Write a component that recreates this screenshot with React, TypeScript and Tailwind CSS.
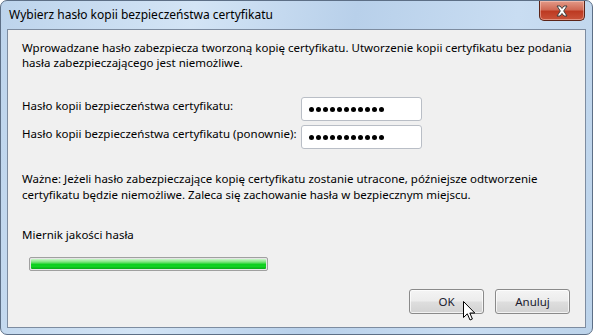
import React from "react";

const font = { fontFamily: '"Noto Sans", "Open Sans", sans-serif' };

const Dots = () => (
  <div className="flex items-center pl-[6px] h-full">
    {Array.from({ length: 11 }).map((_, i) => (
      <span key={i} className="w-[7px] flex justify-center">
        <span className="block w-[5px] h-[5px] rounded-full bg-black" />
      </span>
    ))}
  </div>
);

const Field = ({ label }: { label: string }) => (
  <div className="flex items-start h-[24px]">
    <div className="w-[279px] pt-[1px] leading-[15px] whitespace-nowrap">{label}</div>
    <div className="w-[121px] h-[24px] bg-white border border-[#b9bec6] rounded-[3px]">
      <Dots />
    </div>
  </div>
);

const Button = ({ children }: { children: React.ReactNode }) => (
  <button className="w-[75px] h-[25px] border border-[#8a8a8a] rounded-[3px] bg-[linear-gradient(180deg,#f4f4f4_0%,#ececec_48%,#dedede_52%,#d2d2d2_100%)] text-[11.5px] text-[#1a1a2e] leading-none shadow-[inset_0_0_0_1px_rgba(255,255,255,0.7)]">
    {children}
  </button>
);

export default function App() {
  return (
    <div
      className="relative w-[593px] h-[335px] rounded-[7px] border border-[#5d6f86] bg-[linear-gradient(100deg,#bdd4ec_0%,#d3e4f5_30%,#b8d0ea_55%,#c9ddf2_80%,#bcd3ea_100%)] overflow-hidden text-[11.5px] text-black"
      style={font}
    >
      <div className="h-[28px] flex items-center pl-[8px] text-[12px] text-black whitespace-nowrap">
        Wybierz hasło kopii bezpieczeństwa certyfikatu
      </div>

      <div className="absolute right-[7px] top-0 w-[46px] h-[20px] rounded-b-[5px] border border-t-0 border-[#5b2418] bg-[linear-gradient(180deg,#e39a88_0%,#d06a55_45%,#bd3a22_55%,#c9533a_100%)] flex items-center justify-center shadow-[inset_0_0_0_1px_rgba(255,220,210,0.45)]">
        <svg width="14" height="12" viewBox="0 0 14 12">
          <path
            d="M2 1 L5 1 L7 3.5 L9 1 L12 1 L8.7 6 L12 11 L9 11 L7 8.5 L5 11 L2 11 L5.3 6 Z"
            fill="#ffffff"
            stroke="#3f3f3f"
            strokeWidth="1"
            strokeLinejoin="round"
          />
        </svg>
      </div>

      <div className="absolute left-[6px] top-[28px] w-[579px] h-[299px] border border-[#7d8ca0] bg-[#f0f0f0] flex flex-col pl-[14px] pr-[15px] pt-[10px]">
        <p className="leading-[15px] whitespace-nowrap">
          Wprowadzane hasło zabezpiecza tworzoną kopię certyfikatu. Utworzenie kopii certyfikatu bez podania
          <br />
          hasła zabezpieczającego jest niemożliwe.
        </p>

        <div className="mt-[27px] flex flex-col gap-[4px]">
          <Field label="Hasło kopii bezpieczeństwa certyfikatu:" />
          <Field label="Hasło kopii bezpieczeństwa certyfikatu (ponownie):" />
        </div>

        <p className="mt-[22px] leading-[16px] whitespace-nowrap">
          Ważne: Jeżeli hasło zabezpieczające kopię certyfikatu zostanie utracone, późniejsze odtworzenie
          <br />
          certyfikatu będzie niemożliwe. Zaleca się zachowanie hasła w bezpiecznym miejscu.
        </p>

        <p className="mt-[24px] leading-[16px]">Miernik jakości hasła</p>

        <div className="mt-[14px] ml-[7px] w-[239px] h-[14px] rounded-[2px] border border-[#a0a0a0] bg-[#e6e6e6] p-[1px]">
          <div className="w-full h-full rounded-[1px] bg-[linear-gradient(180deg,#c8f5c8_0%,#7ee57e_30%,#0fcf1f_55%,#12d322_75%,#0aa818_100%)]" />
        </div>

        <div className="mt-[18px] flex justify-end gap-[11px]">
          <Button>OK</Button>
          <Button>Anuluj</Button>
        </div>
      </div>

      <svg
        className="absolute left-[462px] top-[300px]"
        width="13"
        height="21"
        viewBox="0 0 13 21"
      >
        <path
          d="M0.5 0.5 L0.5 16.5 L4.3 12.8 L7 19 L9.4 18 L6.8 12 L11.8 12 Z"
          fill="#ffffff"
          stroke="#000000"
          strokeWidth="1"
          strokeLinejoin="miter"
        />
      </svg>
    </div>
  );
}
